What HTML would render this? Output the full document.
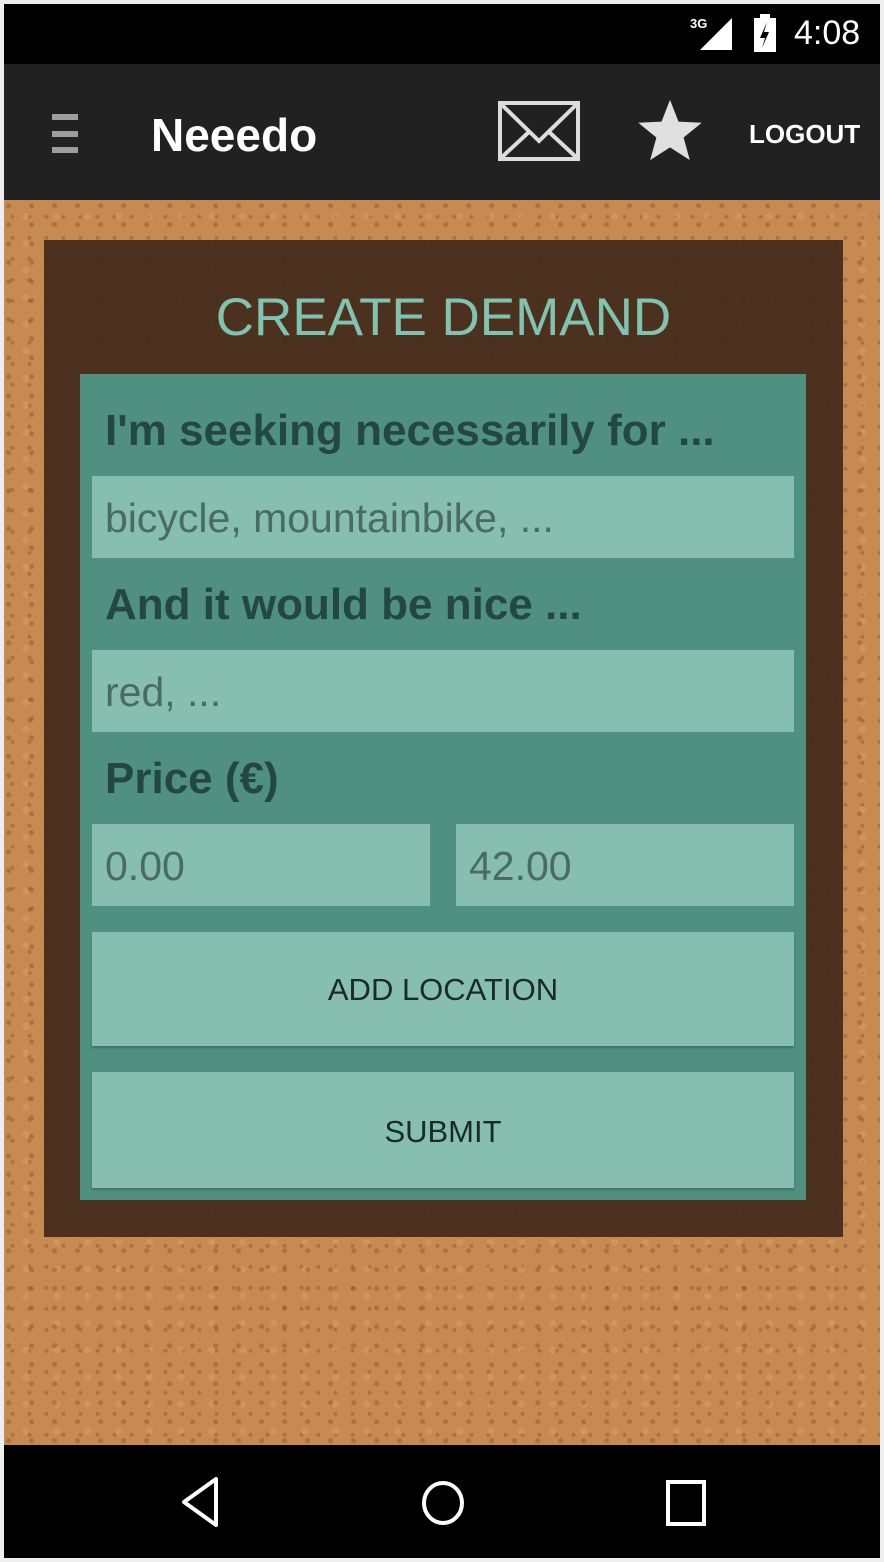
<!DOCTYPE html>
<html><head><style>
*{margin:0;padding:0;box-sizing:border-box}
body{width:884px;height:1562px;background:#eeeeee;position:relative;overflow:hidden;font-family:"Liberation Sans",sans-serif}
.abs{position:absolute}
#status{left:4px;top:4px;width:876px;height:60px;background:#000}
#bar{left:4px;top:64px;width:876px;height:136px;background:#212121}
#cork{left:4px;top:200px;width:876px;height:1245px;background:#c68a52;
background-image:radial-gradient(circle at 20% 30%,rgba(120,70,30,.35) 0 2px,transparent 3px),radial-gradient(circle at 70% 60%,rgba(230,170,110,.35) 0 3px,transparent 4px),radial-gradient(circle at 50% 80%,rgba(110,60,25,.3) 0 1.5px,transparent 2.5px);
background-size:23px 19px,31px 27px,17px 21px}
#nav{left:4px;top:1445px;width:876px;height:113px;background:#000}
#panel{left:44px;top:240px;width:799px;height:997px;background:rgba(62,40,24,.9)}
#title{left:44px;top:287px;width:799px;text-align:center;color:#7fc4b0;font-size:53px}
#card{left:80px;top:374px;width:726px;height:826px;background:#4f9080}
.lbl{position:absolute;left:105px;color:#24483f;font-weight:bold;font-size:44px}
.inp{position:absolute;background:#86beb0;color:#4a6b63;font-size:41px;padding-left:13px;line-height:84px;height:82px}
.btn{position:absolute;left:92px;width:702px;background:#86beb0;color:#1a2a26;font-size:31px;text-align:center;box-shadow:0 2px 2px rgba(0,0,0,.2)}
</style></head><body>
<div class="abs" id="status"></div>
<div class="abs" style="left:690px;top:16px;color:#fff;font-size:13px;font-weight:bold">3G</div>
<svg class="abs" style="left:698px;top:16px" width="36" height="36"><polygon points="34,2 34,34 2,34" fill="#fff"/></svg>
<svg class="abs" style="left:752px;top:14px" width="26" height="38"><rect x="8" y="0" width="10" height="5" fill="#fff"/><rect x="2" y="4" width="22" height="34" fill="#fff"/><polygon points="15,8 8,24 13,24 10,34 17,18 12,18" fill="#000"/></svg>
<div class="abs" style="left:794px;top:14px;color:#fff;font-size:34px">4:08</div>
<div class="abs" id="bar"></div>
<div class="abs" style="left:52px;top:114px;width:26px;height:6px;background:#9e9e9e"></div>
<div class="abs" style="left:52px;top:131px;width:26px;height:6px;background:#9e9e9e"></div>
<div class="abs" style="left:52px;top:147px;width:26px;height:6px;background:#9e9e9e"></div>
<div class="abs" style="left:151px;top:108px;color:#fff;font-size:46px;font-weight:bold">Neeedo</div>
<svg class="abs" style="left:498px;top:101px" width="82" height="60"><rect x="2" y="2" width="78" height="56" fill="none" stroke="#ddd" stroke-width="4"/><polyline points="4,4 41,40 78,4" fill="none" stroke="#ddd" stroke-width="4"/><line x1="4" y1="56" x2="32" y2="30" stroke="#ddd" stroke-width="4"/><line x1="78" y1="56" x2="50" y2="30" stroke="#ddd" stroke-width="4"/></svg>
<svg class="abs" style="left:636px;top:98px" width="68" height="66" viewBox="0 0 24 23"><polygon points="12,0.5 15,8.2 23.2,8.6 16.8,13.8 19,21.8 12,17.3 5,21.8 7.2,13.8 0.8,8.6 9,8.2" fill="#e0e0e0"/></svg>
<div class="abs" style="left:749px;top:119px;color:#fff;font-size:26px;font-weight:bold">LOGOUT</div>
<div class="abs" id="cork"></div>
<div class="abs" id="panel"></div>
<div class="abs" id="title">CREATE DEMAND</div>
<div class="abs" id="card"></div>
<div class="lbl" style="top:406px">I'm seeking necessarily for ...</div>
<div class="inp" style="left:92px;top:476px;width:702px">bicycle, mountainbike, ...</div>
<div class="lbl" style="top:580px">And it would be nice ...</div>
<div class="inp" style="left:92px;top:650px;width:702px">red, ...</div>
<div class="lbl" style="top:754px">Price (€)</div>
<div class="inp" style="left:92px;top:824px;width:338px">0.00</div>
<div class="inp" style="left:456px;top:824px;width:338px">42.00</div>
<div class="btn" style="top:932px;height:114px;line-height:116px">ADD LOCATION</div>
<div class="btn" style="top:1072px;height:116px;line-height:120px">SUBMIT</div>
<div class="abs" id="nav"></div>
<svg class="abs" style="left:176px;top:1475px" width="50" height="56"><polygon points="40,4 40,50 8,27" fill="none" stroke="#fff" stroke-width="4" stroke-linejoin="round"/></svg>
<svg class="abs" style="left:418px;top:1476px" width="50" height="54"><ellipse cx="25" cy="27" rx="19" ry="20" fill="none" stroke="#fff" stroke-width="4"/></svg>
<svg class="abs" style="left:664px;top:1478px" width="44" height="50"><rect x="4" y="4" width="36" height="42" fill="none" stroke="#fff" stroke-width="4"/></svg>
</body></html>
